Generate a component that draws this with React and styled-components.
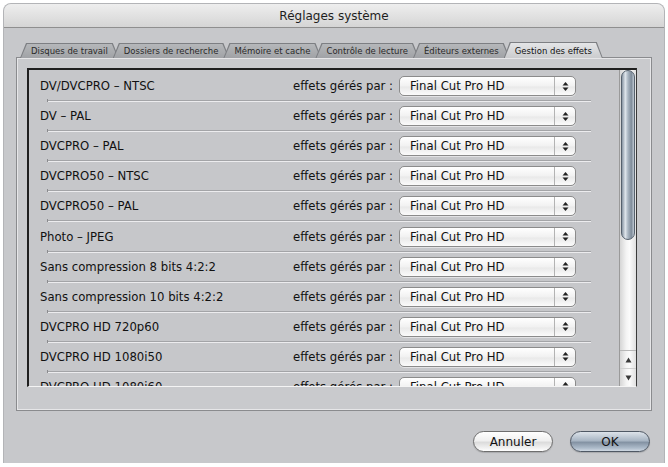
import React from 'react'
import styled, { createGlobalStyle } from 'styled-components'

// Global page reset
const GlobalStyle = createGlobalStyle`
  html, body { margin: 0; padding: 0; background: #fff; }
  body { font-family: 'DejaVu Sans', 'Liberation Sans', sans-serif; }
`

// Window frame
const Window = styled.div`
  margin: 4px 0 0 4px;
  width: 660px;
  height: 459px;
  display: flex;
  flex-direction: column;
  background: #c7c8cb;
  border-radius: 7px 7px 0 0;
  box-shadow: 0 0 0 1px #b3b4b7;
  overflow: hidden;
`

const TitleBar = styled.div`
  flex: none;
  height: 23px;
  display: flex;
  align-items: center;
  justify-content: center;
  font-size: 12px;
  color: #1e1e1e;
  background: linear-gradient(#eeeeee, #d5d5d5);
  border-bottom: 1px solid #8f8f8f;
`

const Body = styled.div`
  padding: 14px 12px 0 12px;
  display: flex;
  flex-direction: column;
`

// Tabs
const TabStrip = styled.div`
  display: flex;
  align-items: flex-end;
  height: 16px;
  padding-left: 4px;
  margin-bottom: -1px;
  position: relative;
  z-index: 2;
`

const TabShape = styled.div`
  position: relative;
  height: ${p => (p.$active ? 16 : 15)}px;
  margin-left: ${p => (p.$first ? 0 : -6)}px;
  padding: 1px 1px 0 1px;
  box-sizing: border-box;
  background: #7d7f83;
  clip-path: polygon(6px 0, calc(100% - 6px) 0, 100% 100%, 0 100%);
  z-index: ${p => (p.$active ? 3 : 1)};
`

const TabFace = styled.div`
  height: 100%;
  display: flex;
  align-items: center;
  padding: 0 10px;
  font-size: 8.5px;
  color: ${p => (p.$active ? '#111' : '#2a2a2a')};
  white-space: nowrap;
  background: ${p => (p.$active
    ? 'linear-gradient(#e4e5e7, #cbccce)'
    : 'linear-gradient(#b5b7ba, #a0a2a6)')};
  clip-path: polygon(6px 0, calc(100% - 6px) 0, 100% 100%, 0 100%);
`

// Tab panel
const Panel = styled.div`
  height: 354px;
  box-sizing: border-box;
  border: 1px solid #8a8b8e;
  box-shadow: inset 1px 1px 0 #e6e6e8, inset -1px -1px 0 #e6e6e8;
  background: #c9cacd;
  padding: 10px 14px 0 10px;
`

const List = styled.div`
  width: 610px;
  height: 319px;
  box-sizing: border-box;
  display: flex;
  background: #c6c7ca;
  border-top: 2px solid #1f1f1f;
  border-left: 2px solid #1f1f1f;
  border-right: 1px solid #3a3a3a;
  border-bottom: 1px solid #f4f4f4;
`

const Rows = styled.div`
  flex: 1;
  overflow: hidden;
  padding-top: 1px;
`

const Row = styled.div`
  position: relative;
  height: 30.1px;
  display: flex;
  align-items: center;
  padding: 0 43px 0 11px;

  &::after {
    content: '';
    position: absolute;
    left: 19px;
    bottom: -1px;
    width: 543px;
    height: 1px;
    border-top: 1px solid #a3a4a7;
    background: #ececee;
  }
  &::before {
    content: '';
    position: absolute;
    left: 18px;
    bottom: -1px;
    width: 1px;
    height: 3px;
    background: #8a8b8e;
  }
`

const Label = styled.div`
  flex: 1;
  font-size: 11.7px;
  color: #111;
  white-space: nowrap;
`

const ByLabel = styled.div`
  font-size: 11.7px;
  color: #111;
  margin-right: 6px;
  white-space: nowrap;
`

const Popup = styled.div`
  width: 177px;
  height: 20px;
  box-sizing: border-box;
  display: flex;
  border: 1px solid #8b8b8b;
  border-radius: 5px;
  background: linear-gradient(#ffffff, #f1f1f1 50%, #e9e9e9 55%, #fbfbfb);
  box-shadow: 0 1px 0 rgba(255, 255, 255, 0.5);
`

const PopupText = styled.div`
  flex: 1;
  display: flex;
  align-items: center;
  padding-left: 10px;
  font-size: 11.7px;
  color: #111;
`

const PopupArrows = styled.div`
  width: 20px;
  border-left: 1px solid #b3b3b3;
  display: flex;
  align-items: center;
  justify-content: center;
`

// Scrollbar
const Scrollbar = styled.div`
  flex: none;
  width: 16px;
  display: flex;
  flex-direction: column;
  border-left: 1px solid #9a9a9a;
  background: linear-gradient(90deg, #d6d6d6, #f4f4f4 40%, #fbfbfb 60%, #e0e0e0);
`

const Thumb = styled.div`
  height: 170px;
  margin: 0 1px;
  box-sizing: border-box;
  border-radius: 8px;
  border: 1px solid #56616d;
  background: linear-gradient(90deg, #8895a3, #dfe5eb 28%, #a9b5c1 50%, #7f8c9a 78%, #c0cad4);
`

const Spacer = styled.div`
  flex: 1;
`

const ArrowButton = styled.div`
  height: 17px;
  display: flex;
  align-items: center;
  justify-content: center;
  border-top: 1px solid ${p => (p.$first ? '#b7b7b7' : '#d0d0d0')};
`

// Footer buttons
const Footer = styled.div`
  display: flex;
  justify-content: flex-end;
  gap: 17px;
  padding: 20px 2px 0 0;
`

const Button = styled.button`
  width: 80px;
  height: 21px;
  border-radius: 11px;
  font-family: 'DejaVu Sans', 'Liberation Sans', sans-serif;
  font-size: 12px;
  color: #111;
  padding: 0;
  border: 1px solid ${p => (p.$primary ? '#4f5864' : '#6e6e6e')};
  background: ${p => (p.$primary
    ? 'linear-gradient(#dde3ea, #a9b6c4 45%, #8493a4 55%, #aebccb 85%, #cfd8e2)'
    : 'linear-gradient(#ffffff, #f0f0f0 45%, #dcdcdc 55%, #f2f2f2 85%, #ffffff)')};
  box-shadow: 0 1px 1px rgba(0, 0, 0, 0.15);
`

const tabs = [
  'Disques de travail',
  'Dossiers de recherche',
  'Mémoire et cache',
  'Contrôle de lecture',
  'Éditeurs externes',
  'Gestion des effets',
]

const formats = [
  'DV/DVCPRO – NTSC',
  'DV – PAL',
  'DVCPRO – PAL',
  'DVCPRO50 – NTSC',
  'DVCPRO50 – PAL',
  'Photo – JPEG',
  'Sans compression 8 bits 4:2:2',
  'Sans compression 10 bits 4:2:2',
  'DVCPRO HD 720p60',
  'DVCPRO HD 1080i50',
  'DVCPRO HD 1080i60',
]

function UpDown() {
  return (
    <svg width="7" height="11" viewBox="0 0 7 11">
      <path d="M3.5 1 L6.5 4.5 L0.5 4.5 Z" fill="#222" />
      <path d="M3.5 10 L6.5 6.5 L0.5 6.5 Z" fill="#222" />
    </svg>
  )
}

function Tri({ down }) {
  return (
    <svg width="7" height="6" viewBox="0 0 7 6">
      <path d={down ? 'M0.5 0.5 L6.5 0.5 L3.5 5.5 Z' : 'M3.5 0.5 L6.5 5.5 L0.5 5.5 Z'} fill="#3a3a3a" />
    </svg>
  )
}

export default function App() {
  return (
    <>
      <GlobalStyle />
      <Window>
        <TitleBar>Réglages système</TitleBar>
        <Body>
          <TabStrip>
            {tabs.map((t, i) => {
              const active = i === tabs.length - 1
              return (
                <TabShape key={t} $first={i === 0} $active={active}>
                  <TabFace $active={active}>{t}</TabFace>
                </TabShape>
              )
            })}
          </TabStrip>
          <Panel>
            <List>
              <Rows>
                {formats.map(f => (
                  <Row key={f}>
                    <Label>{f}</Label>
                    <ByLabel>effets gérés par :</ByLabel>
                    <Popup>
                      <PopupText>Final Cut Pro HD</PopupText>
                      <PopupArrows><UpDown /></PopupArrows>
                    </Popup>
                  </Row>
                ))}
              </Rows>
              <Scrollbar>
                <Thumb />
                <Spacer />
                <ArrowButton $first><Tri /></ArrowButton>
                <ArrowButton><Tri down /></ArrowButton>
              </Scrollbar>
            </List>
          </Panel>
          <Footer>
            <Button>Annuler</Button>
            <Button $primary>OK</Button>
          </Footer>
        </Body>
      </Window>
    </>
  )
}
